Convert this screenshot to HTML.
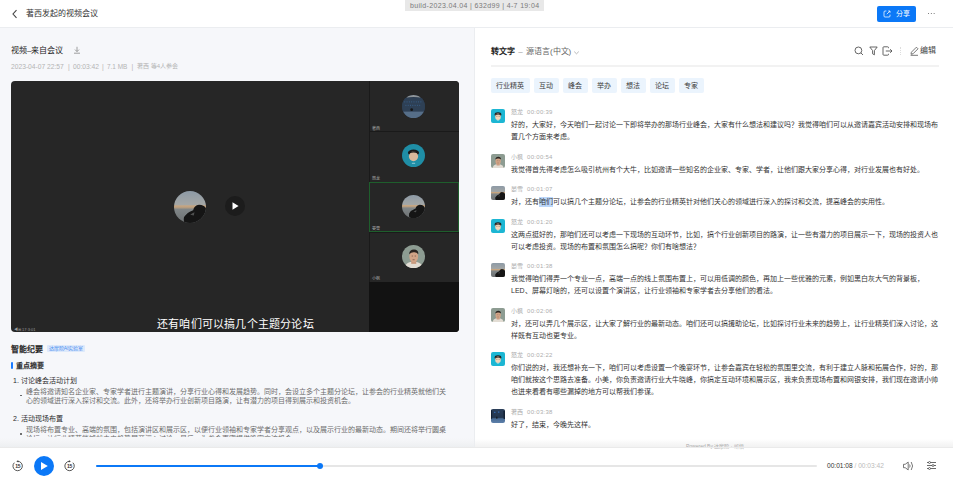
<!DOCTYPE html>
<html lang="zh-CN">
<head>
<meta charset="utf-8">
<style>
*{box-sizing:border-box;margin:0;padding:0}
html,body{width:953px;height:484px;overflow:hidden;background:#fff}
body{font-family:"Liberation Sans",sans-serif;color:#333;position:relative}
.a{position:absolute;white-space:nowrap}
#hdr{position:absolute;left:0;top:0;width:953px;height:28px;background:#fff;border-bottom:1px solid #ebedf0}
#left{position:absolute;left:0;top:28px;width:475px;height:420px;background:#f6f7fa;border-right:1px solid #ebedf0;overflow:hidden}
#right{position:absolute;left:475px;top:28px;width:478px;height:420px;background:#fff;overflow:hidden}
#bar{position:absolute;left:0;top:448px;width:953px;height:36px;background:#fff}
.tag{position:absolute;top:78px;height:15px;line-height:15px;font-size:7px;color:#3c3c3c;background:#ebf4fd;border-radius:2px;padding:0 5.3px}
.av{position:absolute;left:491px;width:14px;height:14px;border-radius:2px;overflow:hidden}
.nm{position:absolute;left:511px;font-size:6px;line-height:8px;color:#adadad;white-space:nowrap}
.nm span{margin-left:4px;letter-spacing:0.3px}
.tx{position:absolute;left:511px;font-size:7px;line-height:12.1px;color:#333;white-space:nowrap}
.hl{font-weight:normal}
.tav{width:23px;height:23px;border-radius:50%;overflow:hidden}
.tlb{left:361px;font-size:4px;line-height:5px;color:#a8a8a8}
.meta{top:62px;font-size:6.7px;line-height:9px;color:#b4b4b4}
.tile{position:absolute;left:369px;width:90px;background:#262626;border-top:1px solid #1b1b1b}
.tile .lb{position:absolute;left:3px;bottom:1px;font-size:4px;color:#ddd}
.tile .c{position:absolute;left:32px;width:23px;height:23px;border-radius:50%;overflow:hidden}
</style>
</head>
<body>
<svg width="0" height="0" style="position:absolute">
<defs>
<linearGradient id="gsky" x1="0" y1="0" x2="0" y2="1"><stop offset="0" stop-color="#8d9aa6"/><stop offset="0.42" stop-color="#a4a7a6"/><stop offset="0.46" stop-color="#c9a67f"/><stop offset="0.52" stop-color="#b09a80"/><stop offset="0.56" stop-color="#808688"/><stop offset="1" stop-color="#6c7072"/></linearGradient>
<linearGradient id="gzx" x1="0" y1="0" x2="0" y2="1"><stop offset="0" stop-color="#2b3f5a"/><stop offset="0.6" stop-color="#23364f"/><stop offset="0.7" stop-color="#4a6d96"/><stop offset="1" stop-color="#5d80aa"/></linearGradient>
<symbol id="s-yx" viewBox="0 0 100 100"><rect width="100" height="100" fill="url(#gsky)"/><path d="M31 80 Q40 66 59 59 Q62 44 77 42 Q95 42 100 57 L100 100 L34 100 Q28 92 31 80 Z" fill="#151515"/><path d="M50 73 Q57 67 63 65 L61 75 Z" fill="#7d8080" opacity=".55"/></symbol>
<symbol id="s-nl" viewBox="0 0 100 100"><rect width="100" height="100" fill="#1cb6d3"/><ellipse cx="50" cy="40" rx="24" ry="16" fill="#1e1e1e"/><ellipse cx="50" cy="56" rx="20" ry="23" fill="#f4d5b8"/><path d="M32 44 Q50 36 70 44 L70 38 Q50 28 30 40Z" fill="#1e1e1e"/><path d="M35 52 H47 M53 52 H65" stroke="#6b5a50" stroke-width="3"/><rect x="42" y="82" width="16" height="3" fill="#d8f3f8"/></symbol>
<symbol id="s-xf" viewBox="0 0 100 100"><rect width="100" height="100" fill="#8d9c92"/><path d="M10 100 Q16 78 36 74 L64 74 Q86 78 92 100Z" fill="#e3ddd4"/><rect x="40" y="60" width="22" height="22" fill="#c99a7e"/><ellipse cx="51" cy="50" rx="19" ry="25" fill="#d2a487"/><path d="M31 40 Q32 20 52 20 Q72 20 71 40 Q62 30 50 32 Q40 32 31 40Z" fill="#2a2420"/><path d="M42 48 h6 M55 48 h6 M46 64 h9" stroke="#6e4f40" stroke-width="3"/></symbol>
<symbol id="s-zx" viewBox="0 0 100 100"><rect width="100" height="100" fill="url(#gzx)"/><path d="M0 0 V70 L8 70 V10Z M88 15 L100 10 V72 L90 72Z" fill="#142235"/><rect x="22" y="20" width="10" height="8" fill="#3d7fd6" opacity=".8"/><rect x="50" y="18" width="10" height="8" fill="#3d7fd6" opacity=".8"/><path d="M38 58 Q42 48 46 58 L44 72 L40 72Z" fill="#111"/></symbol>
<symbol id="s-zxr" viewBox="0 0 100 100"><rect width="100" height="100" fill="#2b3b4f"/><path d="M20 5 Q50 -5 80 5 L80 12 Q50 6 20 12Z" fill="#8f9599"/><rect x="0" y="12" width="100" height="58" fill="#2e4055"/><path d="M10 30 h80 M15 45 h70" stroke="#3a6390" stroke-width="4" stroke-dasharray="4 6"/><rect x="0" y="72" width="100" height="28" fill="#566e88"/><circle cx="42" cy="64" r="6" fill="#151515"/></symbol>
<symbol id="s-nlr" viewBox="0 0 100 100"><rect width="100" height="100" fill="#1f8ea6"/><ellipse cx="50" cy="38" rx="24" ry="14" fill="#1a1a1a"/><ellipse cx="50" cy="54" rx="20" ry="21" fill="#d9b99c"/><path d="M30 42 Q50 32 70 42 L70 36 Q50 26 30 38Z" fill="#1a1a1a"/><rect x="43" y="82" width="14" height="3" fill="#bfe6ee"/></symbol>
</defs></svg>
<!-- header -->
<div id="hdr">
  <svg class="a" style="left:11px;top:9px" width="8" height="10" viewBox="0 0 8 10"><path d="M5.5 1.2 L2 5 L5.5 8.8" fill="none" stroke="#444" stroke-width="1.1"/></svg>
  <div class="a" style="left:26px;top:8px;font-size:8px;line-height:11px;color:#333">著西发起的视频会议</div>
  <div class="a" style="left:405px;top:0;width:139px;height:11px;background:#e8e8e8;font-size:7px;line-height:11px;color:#7a7a7a;text-align:center;letter-spacing:0.35px;padding-left:0.35px">build-2023.04.04 | 632d99 | 4-7 19:04</div>
  <div class="a" style="left:877px;top:6px;width:39px;height:16px;background:#0b78f7;border-radius:2px"></div>
  <svg class="a" style="left:883px;top:9.6px" width="8" height="8" viewBox="0 0 8 8"><path d="M3.4 1 H2 Q1 1 1 2 V6 Q1 7 2 7 H6 Q7 7 7 6 V4.6" fill="none" stroke="#fff" stroke-width="0.75"/><path d="M3.8 4.2 L6.9 1.1 M5.2 1 H7 V2.8" fill="none" stroke="#fff" stroke-width="0.75"/></svg>
  <div class="a" style="left:895.5px;top:8.8px;font-size:7px;line-height:10px;color:#fff">分享</div>
  <div class="a" style="left:927.5px;top:12.6px;width:1.6px;height:1.6px;background:#555;border-radius:1px;box-shadow:2.8px 0 0 #555,5.6px 0 0 #555"></div>
</div>

<!-- left panel -->
<div id="left"></div>
  <div class="a" style="left:11px;top:45px;font-size:8px;line-height:12px;font-weight:bold;color:#222;font-weight:500">视频–来自会议</div>
  <svg class="a" style="left:73px;top:46px" width="8" height="8" viewBox="0 0 8 8"><path d="M4 0.8 V5.5 M2 3.6 L4 5.6 L6 3.6 M1 7.2 H7" fill="none" stroke="#888" stroke-width="0.8"/></svg>
  <div class="a meta" style="left:11px">2023-04-07 22:57</div><div class="a meta" style="left:68px">|</div><div class="a meta" style="left:73px">00:03:42</div><div class="a meta" style="left:102px">|</div><div class="a meta" style="left:107px;font-size:6.4px">7.1 MB</div><div class="a meta" style="left:131.5px">|</div><div class="a meta" style="left:137px;font-size:6px">著西 等4人参会</div>

  <!-- video -->
  <div class="a" style="left:11px;top:81px;width:448px;height:251px;background:#262626;border-radius:4px;overflow:hidden">
    <div class="a" style="left:162.5px;top:109.5px;width:32.5px;height:32.5px;border-radius:50%;overflow:hidden"><svg width="32.5" height="32.5"><use href="#s-yx"/></svg></div>
    <div class="a" style="left:214px;top:115px;width:20px;height:20px;border-radius:50%;background:#1c1c1c"></div>
    <svg class="a" style="left:219px;top:120px" width="10" height="10" viewBox="0 0 10 10"><path d="M2.5 1.2 L8.6 5 L2.5 8.8Z" fill="#fff"/></svg>
    <div class="a" style="left:146px;top:236px;font-size:11px;letter-spacing:0.2px;line-height:14px;color:#fff">还有咱们可以搞几个主题分论坛</div>
    <div class="a" style="left:3px;top:246px;font-size:4px;line-height:5px;color:#9a9a9a">◀⊞ 17:3:01</div>
    <div class="a" style="left:358px;top:0;width:90px;height:251px;background:#262626;border-left:1px solid #1a1a1a"></div>
    <div class="a" style="left:358px;top:50px;width:90px;height:1px;background:#1a1a1a"></div>
    <div class="a" style="left:358px;top:100.5px;width:90px;height:1px;background:#1a1a1a"></div>
    <div class="a" style="left:358px;top:101px;width:90px;height:50px;border:1px solid #1e5e2c"></div>
    <div class="a" style="left:358px;top:150.5px;width:90px;height:1px;background:#1a1a1a"></div>
    <div class="a" style="left:358px;top:201px;width:90px;height:50px;background:#121212;background-image:radial-gradient(#191915 0.5px,transparent 0.6px);background-size:2px 2px"></div>
    <div class="a tav" style="left:390.5px;top:13.5px"><svg width="23" height="23"><use href="#s-zxr"/></svg></div>
    <div class="a tav" style="left:390.5px;top:63px"><svg width="23" height="23"><use href="#s-nlr"/></svg></div>
    <div class="a tav" style="left:390.5px;top:113.5px"><svg width="23" height="23"><use href="#s-yx"/></svg></div>
    <div class="a tav" style="left:390.5px;top:164px"><svg width="23" height="23"><use href="#s-xf"/></svg></div>
    <div class="a tlb" style="top:45px">著西</div>
    <div class="a tlb" style="top:95px">怒龙</div>
    <div class="a tlb" style="top:145px">晏雪</div>
    <div class="a tlb" style="top:195px">小枫</div>
  </div>

<!-- right panel -->

<div class="a" style="left:11px;top:343.5px;font-size:8px;line-height:12px;font-weight:bold;color:#2a2a2a">智能纪要</div>
<div class="a" style="left:47px;top:345px;width:38px;height:7px;background:#dde9fb;border-radius:1px;font-size:5px;line-height:7px;color:#4b8ff0;text-align:center">达摩院AI实验室</div>
<div class="a" style="left:11px;top:362px;width:1.5px;height:6.7px;background:#1a7bff;border-radius:1px"></div>
<div class="a" style="left:16.4px;top:359.5px;font-size:7px;line-height:12px;font-weight:bold;color:#333">重点摘要</div>
<div class="a" style="left:13px;top:375px;font-size:7px;line-height:11px;color:#2a2a2a;font-weight:500">1. 讨论峰会活动计划</div>
<div class="a" style="left:20.2px;top:394.8px;width:1.6px;height:1.5px;border-radius:50%;background:#555"></div>
<div class="a" style="left:26.4px;top:386.5px;font-size:7px;line-height:9.6px;color:#6c6c6c">峰会将邀请知名企业家、专家学者进行主题演讲，分享行业心得和发展趋势。同时，会设立多个主题分论坛，让参会的行业精英就他们关<br>心的领域进行深入探讨和交流。此外，还将举办行业创新项目路演，让有潜力的项目得到展示和投资机会。</div>
<div class="a" style="left:13px;top:413px;font-size:7px;line-height:11px;color:#2a2a2a;font-weight:500">2. 活动现场布置</div>
<div class="a" style="left:26.4px;top:424.7px;width:430px;height:12.3px;overflow:hidden;font-size:7px;line-height:9.6px;color:#6c6c6c;white-space:nowrap">现场将布置专业、高端的氛围，包括演讲区和展示区，以便行业领袖和专家学者分享观点，以及展示行业的最新动态。期间还将举行圆桌<br>论坛，让行业精英能够就未来趋势展开深入讨论，最后，为参会嘉宾提供晚宴交流机会。</div>
<div class="a" style="left:20.2px;top:433.2px;width:1.6px;height:1.5px;border-radius:50%;background:#555"></div>
<div class="a" style="left:0;top:437.5px;width:474px;height:10px;background:linear-gradient(180deg,#f6f7fa 0%,#f3f4f6 40%,#eceef0 100%)"></div>
<div id="right"></div>
<div class="a" style="left:491px;top:46px;font-size:8px;line-height:12px;color:#222"><span style="font-weight:bold;color:#222">转文字</span> <span style="color:#999;margin:0 1px">–</span> <span style="color:#666">源语言(中文)</span></div>
<svg class="a" style="left:572.5px;top:49px" width="7" height="7" viewBox="0 0 7 7"><path d="M1.2 2.6 L3.5 4.8 L5.8 2.6" fill="none" stroke="#999" stroke-width="0.7"/></svg>
<svg class="a" style="left:854px;top:46px" width="10" height="10" viewBox="0 0 10 10"><circle cx="4.4" cy="4.4" r="3.4" fill="none" stroke="#555" stroke-width="0.9"/><path d="M6.9 6.9 L9 9" stroke="#555" stroke-width="0.9"/></svg>
<svg class="a" style="left:868.5px;top:46px" width="9" height="10" viewBox="0 0 9 10"><path d="M0.8 1 H8.2 L5.4 4.6 V8.8 L3.6 7.8 V4.6 Z" fill="none" stroke="#555" stroke-width="0.9" stroke-linejoin="round"/></svg>
<svg class="a" style="left:882px;top:46px" width="11" height="10" viewBox="0 0 11 10"><path d="M6.5 2.2 V1.6 Q6.5 0.8 5.7 0.8 H1.8 Q1 0.8 1 1.6 V8.4 Q1 9.2 1.8 9.2 H5.7 Q6.5 9.2 6.5 8.4 V7.8" fill="none" stroke="#555" stroke-width="0.9"/><path d="M3.8 5 H10 M8.2 3.2 L10 5 L8.2 6.8" fill="none" stroke="#555" stroke-width="0.9"/></svg>
<div class="a" style="left:900px;top:47px;width:0;height:8px;border-left:1px dotted #ddd"></div>
<svg class="a" style="left:910px;top:46px" width="9" height="10" viewBox="0 0 9 10"><path d="M1 8.2 L1.4 6.2 L6.4 1.2 L8 2.8 L3 7.8 Z M0.6 9.3 H8" fill="none" stroke="#555" stroke-width="0.8" stroke-linejoin="round"/></svg>
<div class="a" style="left:920px;top:45px;font-size:8px;line-height:12px;color:#444">编辑</div>
<div class="a" style="left:491px;top:65px;width:448px;height:2px;background:#f2f2f2"></div>
<div class="tag" style="left:491px">行业精英</div>
<div class="tag" style="left:534px">互动</div>
<div class="tag" style="left:563px">峰会</div>
<div class="tag" style="left:592px">举办</div>
<div class="tag" style="left:621px">想法</div>
<div class="tag" style="left:650px">论坛</div>
<div class="tag" style="left:679px">专家</div>
<div class="av" style="top:109.2px"><svg width="14" height="14"><use href="#s-nl"/></svg></div>
<div class="nm" style="top:107.7px">怒龙<span>00:00:39</span></div>
<div class="tx" style="top:118.65px">好的，大家好，今天咱们一起讨论一下即将举办的那场行业峰会，大家有什么想法和建议吗？我觉得咱们可以从邀请嘉宾活动安排和现场布<br>置几个方面来考虑。</div>
<div class="av" style="top:154.0px"><svg width="14" height="14"><use href="#s-xf"/></svg></div>
<div class="nm" style="top:153.3px">小枫<span>00:00:54</span></div>
<div class="tx" style="top:164.25px">我觉得首先得考虑怎么吸引杭州有个大牛，比如邀请一些知名的企业家、专家、学者，让他们跟大家分享心得，对行业发展也有好处。</div>
<div class="av" style="top:186.2px"><svg width="14" height="14"><use href="#s-yx"/></svg></div>
<div class="nm" style="top:184.7px">晏雪<span>00:01:07</span></div>
<div class="a" style="left:539px;top:197px;width:14px;height:9.5px;background:#bcd8fb"></div>
<div class="tx" style="top:195.65px">对，还有<b class="hl">咱们</b>可以搞几个主题分论坛，让参会的行业精英针对他们关心的领域进行深入的探讨和交流，提高峰会的实用性。</div>
<div class="av" style="top:219.3px"><svg width="14" height="14"><use href="#s-nl"/></svg></div>
<div class="nm" style="top:217.8px">怒龙<span>00:01:20</span></div>
<div class="tx" style="top:228.75px">这两点挺好的，那咱们还可以考虑一下现场的互动环节，比如，搞个行业创新项目的路演，让一些有潜力的项目展示一下，现场的投资人也<br>可以考虑投资。现场的布置和氛围怎么搞呢？你们有啥想法？</div>
<div class="av" style="top:263.4px"><svg width="14" height="14"><use href="#s-yx"/></svg></div>
<div class="nm" style="top:262.3px">晏雪<span>00:01:38</span></div>
<div class="tx" style="top:273.25px">我觉得咱们得弄一个专业一点，高端一点的线上氛围布置上，可以用低调的颜色，再加上一些优雅的元素，例如黑白灰大气的背景板，<br>LED、屏幕灯啥的，还可以设置个演讲区，让行业领袖和专家学者去分享他们的看法。</div>
<div class="av" style="top:307.7px"><svg width="14" height="14"><use href="#s-xf"/></svg></div>
<div class="nm" style="top:307.2px">小枫<span>00:02:06</span></div>
<div class="tx" style="top:318.15px">对，还可以弄几个展示区，让大家了解行业的最新动态。咱们还可以搞援助论坛，比如探讨行业未来的趋势上，让行业精英们深入讨论，这<br>样既有互动也更专业。</div>
<div class="av" style="top:352.2px"><svg width="14" height="14"><use href="#s-nl"/></svg></div>
<div class="nm" style="top:350.7px">怒龙<span>00:02:22</span></div>
<div class="tx" style="top:361.65px">你们说的对，我还想补充一下，咱们可以考虑设置一个晚宴环节，让参会嘉宾在轻松的氛围里交流，有利于建立人脉和拓展合作，好的，那<br>咱们就按这个思路去准备。小美，你负责邀请行业大牛晓峰，你搞定互动环境和展示区，我来负责现场布置和网银安排，我们现在邀请小帅<br>也进来看看有哪些漏掉的地方可以帮我们参谋。</div>
<div class="av" style="top:409.2px"><svg width="14" height="14"><use href="#s-zx"/></svg></div>
<div class="nm" style="top:407.7px">著西<span>00:03:38</span></div>
<div class="tx" style="top:418.65px">好了，结束，今晚先这样。</div>

<!-- bottom bar -->
<div id="bar"></div>
<div class="a" style="left:475px;top:439px;width:478px;height:9px;background:linear-gradient(180deg,rgba(255,255,255,0),#f7f7f7 50%,#f1f1f1)"></div>
<div class="a" style="left:686px;top:442.5px;font-size:5px;line-height:6px;color:#aaa">Powered By 达摩院 · 听悟</div>
<div class="a" style="left:0;top:447px;width:953px;height:1px;background:#eaeaea"></div>
<svg class="a" style="left:12px;top:460px" width="12" height="12" viewBox="0 0 12 12"><path d="M5.6 1.3 A4.7 4.7 0 1 1 2.3 2.7" fill="none" stroke="#444" stroke-width="0.9"/><path d="M4.3 1.3 L6.3 0.2 L6.3 2.4 Z" fill="#444"/><text x="5.7" y="7.9" font-size="5" text-anchor="middle" fill="#333" font-family="Liberation Sans" font-weight="bold" letter-spacing="-0.3">15</text></svg>
<div class="a" style="left:33.8px;top:456.2px;width:20px;height:20px;border-radius:50%;background:#0b78f7"></div>
<svg class="a" style="left:39px;top:461px" width="10" height="10" viewBox="0 0 10 10"><path d="M2 1 L8.8 5 L2 9Z" fill="#fff"/></svg>
<svg class="a" style="left:64px;top:460px" width="12" height="12" viewBox="0 0 12 12"><path d="M5.6 1.3 A4.7 4.7 0 1 0 8.9 2.7" fill="none" stroke="#444" stroke-width="0.9"/><path d="M6.9 1.3 L4.9 0.2 L4.9 2.4 Z" fill="#444"/><text x="5.6" y="7.9" font-size="5" text-anchor="middle" fill="#333" font-family="Liberation Sans" font-weight="bold" letter-spacing="-0.3">15</text></svg>
<div class="a" style="left:96px;top:465px;width:721px;height:2px;background:#e6e6e6;border-radius:1px"></div>
<div class="a" style="left:96px;top:465px;width:224px;height:2px;background:#0b78f7;border-radius:1px"></div>
<div class="a" style="left:316.5px;top:463px;width:6px;height:6px;border-radius:50%;background:#0b78f7"></div>
<div class="a" style="left:827px;top:461px;font-size:6.6px;line-height:10px;color:#333">00:01:08 <span style="color:#bbb">/ 00:03:42</span></div>
<svg class="a" style="left:902.5px;top:461px" width="12" height="10" viewBox="0 0 12 10"><path d="M0.5 3.3 H2.2 L5.2 1.1 V8.9 L2.2 6.7 H0.5 Z" fill="none" stroke="#555" stroke-width="0.8" stroke-linejoin="round"/><path d="M6.6 3.5 Q7.6 5 6.6 6.5" fill="none" stroke="#555" stroke-width="0.8"/><path d="M8.2 1 Q11 5 8.2 9" fill="none" stroke="#555" stroke-width="0.8"/></svg>
<svg class="a" style="left:926px;top:460px" width="11" height="11" viewBox="0 0 11 11"><path d="M1 2.5 H10 M1 5.5 H10 M1 8.5 H10" stroke="#444" stroke-width="0.8"/><circle cx="3.5" cy="2.5" r="1" fill="#fff" stroke="#444" stroke-width="0.7"/><circle cx="7" cy="5.5" r="1" fill="#fff" stroke="#444" stroke-width="0.7"/><circle cx="3.5" cy="8.5" r="1" fill="#fff" stroke="#444" stroke-width="0.7"/></svg>

</body>
</html>
